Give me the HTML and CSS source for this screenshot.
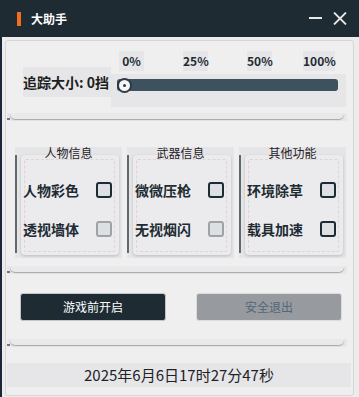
FILE: index.html
```html
<!DOCTYPE html>
<html lang="zh">
<head>
<meta charset="utf-8">
<link rel="stylesheet" href="styles.css">
</head>
<body>
<div class="win">
  <div class="titlebar">
    <span class="accent"></span>
    <span class="title">大助手</span>
    <span class="spacer"></span>
    <svg class="ctl min" width="13" height="13" viewBox="0 0 13 13"><rect x="0" y="5" width="13" height="2" fill="#e6e8ea"/></svg>
    <svg class="ctl close" width="14" height="13" viewBox="0 0 14 13"><path d="M1 0.5 L13 12.5 M13 0.5 L1 12.5" stroke="#e6e8ea" stroke-width="1.8"/></svg>
  </div>
  <div class="frame">
    <div class="slider-sec">
      <div class="lbl">追踪大小: 0挡</div>
      <div class="slider-col">
        <div class="ticks">
          <span class="tick t0">0%</span>
          <span class="tick t25">25%</span>
          <span class="tick t50">50%</span>
          <span class="tick t100">100%</span>
        </div>
        <div class="track-area">
          <div class="track"><span class="handle"><span class="dot"></span></span></div>
        </div>
      </div>
    </div>
    <div class="sep s1"><span class="mark"></span><span class="line"></span></div>

    <div class="groups">
      <div class="group">
        <div class="gtitle">人物信息</div>
        <div class="gbody">
          <span class="bar"></span>
          <div class="card"><div class="inner">
            <div class="row"><span class="txt">人物彩色</span><span class="cb"></span></div>
            <div class="row"><span class="txt">透视墙体</span><span class="cb off"></span></div>
          </div></div>
        </div>
      </div>
      <div class="group">
        <div class="gtitle">武器信息</div>
        <div class="gbody">
          <span class="bar"></span>
          <div class="card"><div class="inner">
            <div class="row"><span class="txt">微微压枪</span><span class="cb"></span></div>
            <div class="row"><span class="txt">无视烟闪</span><span class="cb off"></span></div>
          </div></div>
        </div>
      </div>
      <div class="group">
        <div class="gtitle">其他功能</div>
        <div class="gbody">
          <span class="bar"></span>
          <div class="card"><div class="inner">
            <div class="row"><span class="txt">环境除草</span><span class="cb"></span></div>
            <div class="row"><span class="txt">载具加速</span><span class="cb"></span></div>
          </div></div>
        </div>
      </div>
    </div>
    <div class="sep s2"><span class="mark"></span><span class="line"></span></div>

    <div class="buttons">
      <div class="btn dark">游戏前开启</div>
      <div class="btn gray">安全退出</div>
    </div>
    <div class="sep s3"><span class="mark"></span><span class="line"></span></div>

    <div class="footer">2025年6月6日17时27分47秒</div>
  </div>
</div>
</body>
</html>
```
FILE: styles.css
```css
* { box-sizing: border-box; }
html, body { margin: 0; padding: 0; }
body {
  width: 359px;
  height: 397px;
  background: #ececec;
  font-family: "Noto Sans CJK SC", "Noto Sans", sans-serif;
  overflow: hidden;
}
.win {
  width: 359px;
  height: 397px;
  border-left: 2px solid #1b2738;
  background: #ececec;
}
.titlebar {
  height: 37px;
  margin-left: -2px;
  background: #1e2b33;
  display: flex;
  align-items: center;
}
.accent {
  width: 4px;
  height: 14px;
  margin-left: 17px;
  background: #f36d1f;
}
.title {
  margin-left: 10px;
  color: #ffffff;
  font-size: 12px;
  font-weight: 700;
  line-height: 14px;
}
.spacer { flex: 1; }
.ctl { display: block; }
.min { margin-right: 11px; }
.close { margin-right: 12px; }

.frame {
  margin-top: 3px;
  margin-left: 3px;
  width: 349px;
  height: 356px;
  border: 1px solid #d6d6d8;
  border-radius: 3px;
  background: #efefef;
}

.slider-sec {
  display: flex;
  height: 66px;
}
.lbl {
  margin-left: 17px;
  margin-top: 26px;
  width: 88px;
  height: 30px;
  background: #e6e6e8;
  font-size: 14px;
  font-weight: 700;
  color: #1b1d20;
  line-height: 30px;
  white-space: nowrap;
}
.slider-col {
  width: 235px;
}
.ticks {
  display: flex;
  margin-top: 10px;
  height: 20px;
}
.tick {
  display: block;
  height: 20px;
  background: #e6e6e8;
  font-size: 12px;
  font-weight: 700;
  color: #1e2b33;
  line-height: 20px;
  text-align: center;
}
.t0 { width: 25px; margin-left: 8px; }
.t25 { width: 25px; margin-left: 39px; }
.t50 { width: 25px; margin-left: 39px; }
.t100 { width: 32px; margin-left: 31px; }
.track-area {
  margin-top: 3px;
  height: 33px;
  background: #e6e6e8;
  padding: 5px 8px 0 6px;
}
.track {
  position: relative;
  height: 12px;
  background: #3d525e;
  border-radius: 3px;
}
.handle {
  position: absolute;
  left: 0;
  top: -1.5px;
  width: 15px;
  height: 15px;
  border-radius: 50%;
  background: #f7f7f7;
  border: 2px solid #2c3b45;
  display: flex;
  align-items: center;
  justify-content: center;
}
.dot {
  width: 3px;
  height: 3px;
  border-radius: 50%;
  background: #2c3b45;
}

.sep {
  display: flex;
  align-items: flex-start;
  margin-left: 1px;
  width: 340px;
  height: 8px;
  background: #e7e7e9;
}
.s1 { margin-top: 6px; }
.s2 { margin-top: 8px; }
.s3 { margin-top: 18px; }
.mark {
  width: 3px;
  height: 2px;
  margin-top: 5px;
  background: #6f7679;
}
.line {
  flex: 1;
  height: 6px;
  margin-right: 3px;
  background: #e9e9eb;
  border-radius: 0 0 5px 5px;
  box-shadow: 0 1px 1px rgba(0,0,0,0.28);
}

.groups {
  display: flex;
  gap: 5px;
  margin-left: 9px;
  margin-top: 26px;
}
.group {
  width: 107px;
  background: #e5e5e7;
}
.gtitle {
  height: 8px;
  line-height: 12px;
  font-size: 12px;
  color: #1f2226;
  text-align: center;
  position: relative;
  z-index: 1;
}
.gbody {
  display: flex;
}
.bar {
  width: 2px;
  height: 98px;
  background: #5e6a6d;
}
.card {
  margin-left: 4px;
  width: 98px;
  height: 100px;
  margin-bottom: 3px;
  background: #ebebed;
  border-radius: 4px;
  box-shadow: 0 1px 3px rgba(0,0,0,0.18);
  padding: 4px 4px 3px 3px;
}
.inner {
  height: 93px;
  border: 1px dashed #e0d3d7;
  border-radius: 2px;
  padding-top: 20px;
  display: flex;
  flex-direction: column;
  gap: 19px;
}
.row {
  display: flex;
  align-items: center;
  justify-content: space-between;
  height: 20px;
  margin-left: -2px;
  margin-right: 2px;
}
.txt {
  font-size: 14px;
  font-weight: 700;
  color: #1e2b33;
  white-space: nowrap;
}
.cb {
  width: 16px;
  height: 16px;
  border: 2px solid #1e2b33;
  border-radius: 3px;
  background: #dde0e3;
}
.cb.off {
  border-color: #a0a3a6;
}

.buttons {
  display: flex;
  gap: 30px;
  margin-left: 14px;
  margin-top: 19px;
}
.btn {
  width: 146px;
  height: 28px;
  border-radius: 3px;
  font-size: 12px;
  text-align: center;
  line-height: 26px;
}
.btn.dark {
  background: #1e2b33;
  border: 1px solid #c2c5c8;
  color: #ffffff;
}
.btn.gray {
  background: #979a9e;
  border: 1px solid #dcdcdc;
  color: #53667a;
}

.footer {
  margin-left: 1px;
  margin-top: 16px;
  width: 344px;
  height: 24px;
  background: #e6e6e8;
  font-size: 15px;
  line-height: 24px;
  color: #1e2226;
  text-align: center;
}
```
